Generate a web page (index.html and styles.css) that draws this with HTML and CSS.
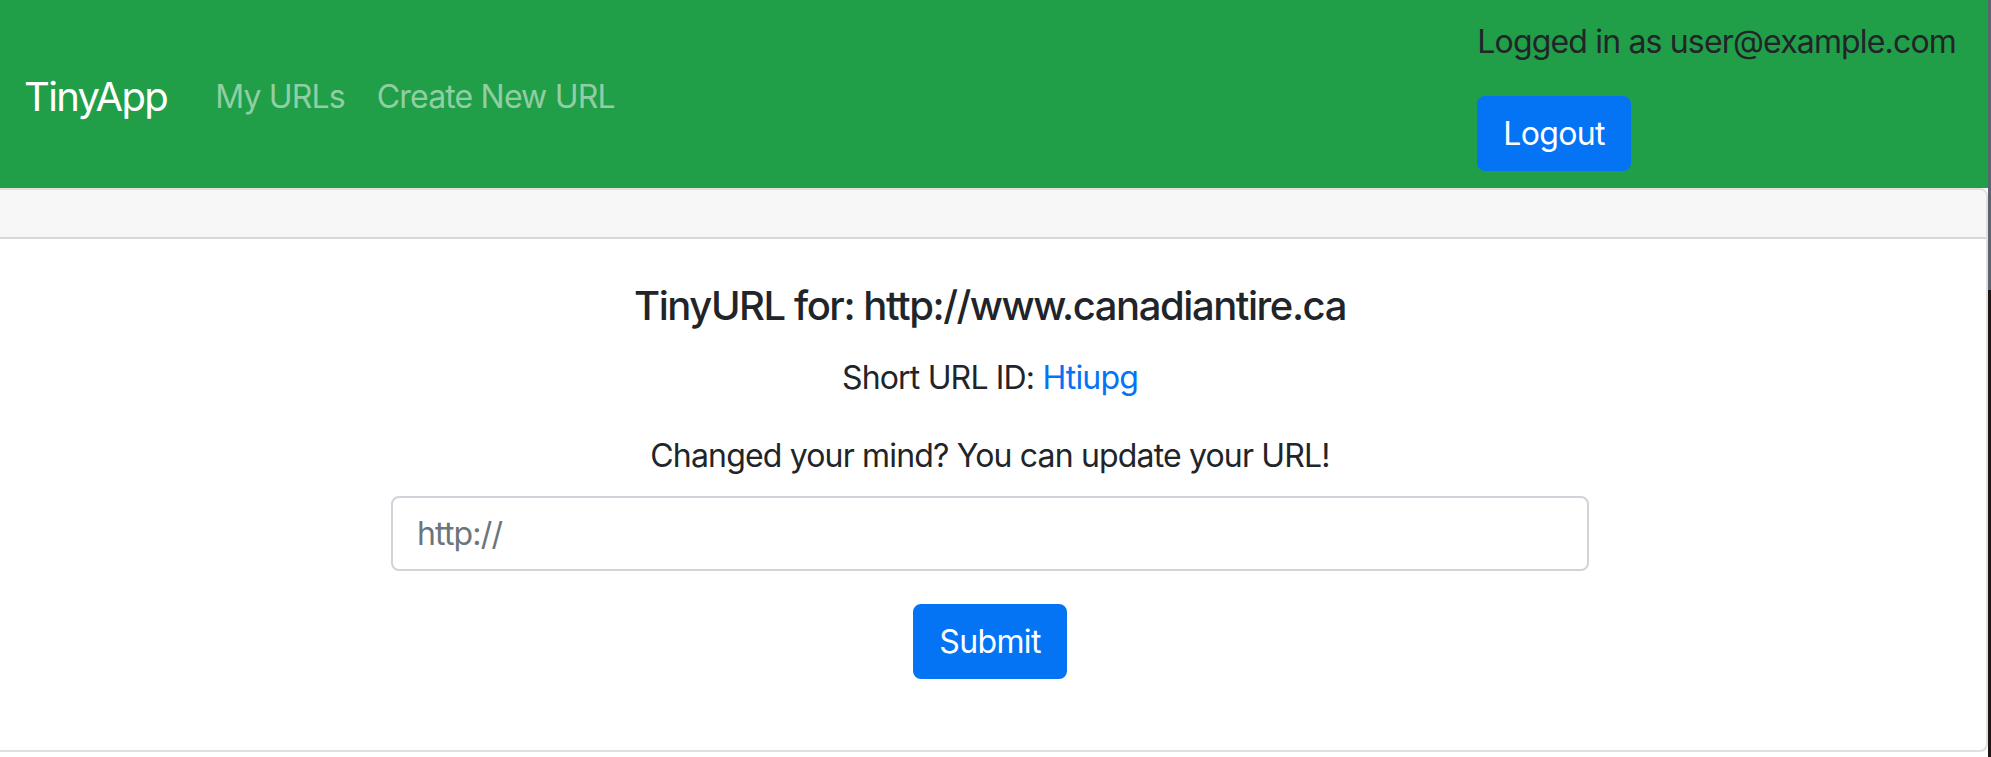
FILE: index.html
```html
<!DOCTYPE html>
<html lang="en">
<head>
<meta charset="utf-8">
<title>TinyApp</title>
<link rel="stylesheet" href="styles.css">
</head>
<body>
  <div class="page">
    <nav class="navbar">
      <a class="brand" href="#">TinyApp</a>
      <ul class="nav">
        <li><a class="nav-link" href="#">My URLs</a></li>
        <li><a class="nav-link" href="#">Create New URL</a></li>
      </ul>
      <div class="account">
        <p class="logged">Logged in as user@example.com</p>
        <button class="btn" type="button">Logout</button>
      </div>
    </nav>
    <main class="card">
      <div class="card-header"></div>
      <div class="card-body">
        <h5 class="title">TinyURL for: http://www.canadiantire.ca</h5>
        <p class="short">Short URL ID: <a class="link" href="#">Htiupg</a></p>
        <p class="changed">Changed your mind? You can update your URL!</p>
        <form class="form">
          <input class="input" type="text" placeholder="http://">
          <button class="btn" type="button">Submit</button>
        </form>
      </div>
    </main>
  </div>
  <div class="edge"></div>
</body>
</html>
```

FILE: styles.css
```css
* { box-sizing: border-box; }

html, body {
  margin: 0;
  height: 757px;
  overflow: hidden;
  background: #ffffff;
}

body {
  display: flex;
  font-family: Inter, "Noto Sans", "Liberation Sans", sans-serif;
  font-size: 32px;
  line-height: 1.5;
  letter-spacing: -0.026em;
  color: #212529;
}

.page {
  flex: none;
  width: 1996px;
  margin-left: -8px;
  display: flex;
  flex-direction: column;
}

.edge {
  flex: none;
  width: 3px;
  background: linear-gradient(#5c6373 0, #5c6373 290px, #1f1717 290px, #1f1717 100%);
}

/* Navbar */
.navbar {
  height: 188px;
  background: #219e48;
  padding: 16px 32px;
  display: flex;
  align-items: center;
}

.brand {
  font-size: 40px;
  line-height: 1.5;
  letter-spacing: -0.042em;
  color: #ffffff;
  text-decoration: none;
  margin: 5px 32px 0 0;
}

.nav {
  list-style: none;
  margin: 5px 0 0;
  padding: 0;
  display: flex;
  flex: 1;
}

.nav-link {
  display: block;
  padding: 16px 16px;
  color: rgba(255, 255, 255, 0.5);
  text-decoration: none;
}

.account {
  align-self: flex-start;
  display: flex;
  flex-direction: column;
  align-items: flex-start;
  padding-top: 2px;
}

.logged {
  margin: 0 0 30px;
  color: #212529;
}

.btn {
  font-family: inherit;
  font-size: 32px;
  line-height: 48px;
  letter-spacing: -0.02em;
  color: #ffffff;
  background: #0474f4;
  border: 2px solid #0474f4;
  border-radius: 8px;
  padding: 12px 24px 11px;
  cursor: pointer;
}

/* Card */
.card {
  flex: 1;
  border: 2px solid rgba(0, 0, 0, 0.125);
  border-radius: 8px;
  margin-bottom: 5px;
  display: flex;
  flex-direction: column;
}

.card-header {
  height: 49px;
  background: #f7f7f7;
  border-bottom: 2px solid rgba(0, 0, 0, 0.125);
  border-radius: 6px 6px 0 0;
}

.card-body {
  flex: 1;
  padding: 43px 40px 40px;
  text-align: center;
}

.title {
  margin: 0 0 24px;
  font-size: 40px;
  line-height: 48px;
  font-weight: 500;
  letter-spacing: -0.036em;
}

.short {
  margin: 0 0 30px;
}

.link {
  color: #0474f4;
  text-decoration: none;
}

.changed {
  margin: 0 0 16px;
}

.form {
  display: flex;
  flex-direction: column;
  align-items: center;
}

.input {
  width: 1198px;
  height: 75px;
  padding: 0 24px;
  font-family: inherit;
  font-size: 32px;
  letter-spacing: -0.026em;
  color: #495057;
  border: 2px solid #ced4da;
  border-radius: 8px;
  margin-bottom: 33px;
}

.input::placeholder {
  color: #6c757d;
}
```
